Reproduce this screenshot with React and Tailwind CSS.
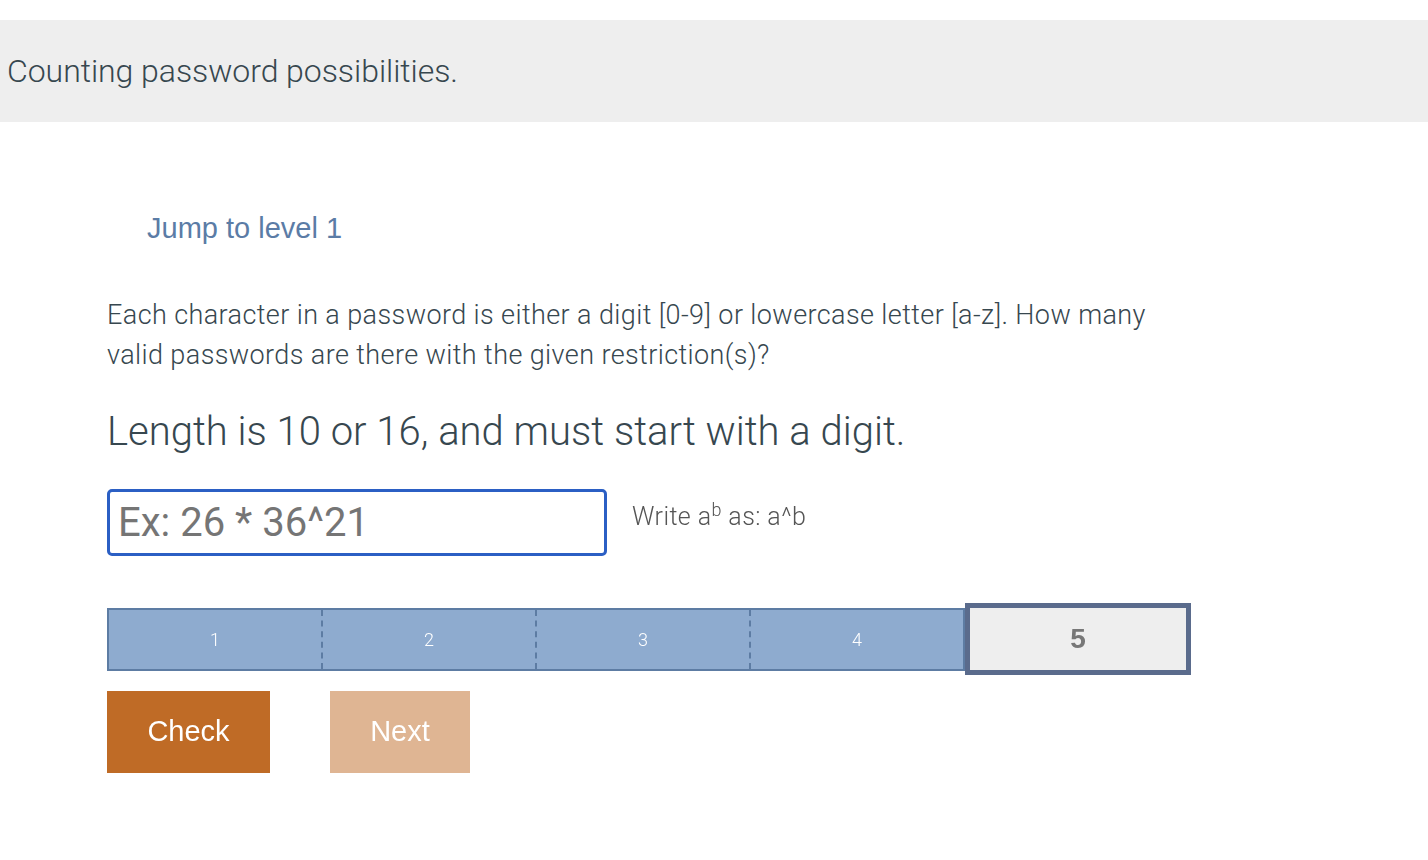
export default function App() {
  const segments = ["1", "2", "3", "4"];

  return (
    <div className="min-h-[860px] bg-white pt-5 font-['Roboto',sans-serif]">
      <div className="h-[102px] bg-[#eeeeee] flex items-center px-[7px]">
        <h1 className="text-[32px] font-light text-[#37474f] tracking-[-0.05px]">
          Counting password possibilities.
        </h1>
      </div>

      <div className="pl-[107px] pt-[84px] w-[1220px]">
        <a className="block ml-[40px] font-['Liberation_Sans',Arial,sans-serif] text-[29px] leading-[44px] text-[#5b7ca6]">
          Jump to level 1
        </a>

        <p className="mt-[45px] text-[27px] font-light leading-[40px] text-[#37474f] tracking-[0.4px]">
          Each character in a password is either a digit [0-9] or lowercase
          letter [a-z]. How many
          <br />
          valid passwords are there with the given restriction(s)?
        </p>

        <h2 className="mt-[29px] text-[40px] font-light leading-[56px] text-[#37474f]">
          Length is 10 or 16, and must start with a digit.
        </h2>

        <div className="mt-[29px] flex items-center">
          <input
            autoFocus
            placeholder="Ex: 26 * 36^21"
            className="w-[500px] h-[67px] border-[3px] border-[#2b5fc4] rounded-[5px] px-[8px] text-[40px] font-['Roboto',sans-serif] text-[#333] placeholder:text-[#757575] outline-none"
          />
          <span className="ml-[25px] mb-[12px] text-[25px] font-light text-[#555] tracking-[0.4px]">
            Write a<sup className="text-[18px]">b</sup> as: a^b
          </span>
        </div>

        <div className="mt-[47px] flex items-center">
          <div className="flex w-[858px] h-[63px] border-2 border-[#5d7ca3] bg-[#8eabcf]">
            {segments.map((s, i) => (
              <div
                key={s}
                className={
                  i === 0
                    ? "flex-1 flex items-center justify-center text-white text-[18px] font-light"
                    : "flex-1 flex items-center justify-center text-white text-[18px] font-light border-l-2 border-dashed border-[#5d7ca3]"
                }
              >
                {s}
              </div>
            ))}
          </div>
          <div className="w-[226px] h-[72px] border-[5px] border-[#5a6b8c] bg-[#eeeeee] flex items-center justify-center font-['Liberation_Sans',Arial,sans-serif] font-bold text-[28px] text-[#777]">
            5
          </div>
        </div>

        <div className="mt-[16px] flex gap-[60px] font-['Liberation_Sans',Arial,sans-serif]">
          <button className="w-[163px] h-[82px] bg-[#bf6b26] text-white text-[29px]">
            Check
          </button>
          <button className="w-[140px] h-[82px] bg-[#dfb593] text-white text-[29px]">
            Next
          </button>
        </div>
      </div>
    </div>
  );
}
